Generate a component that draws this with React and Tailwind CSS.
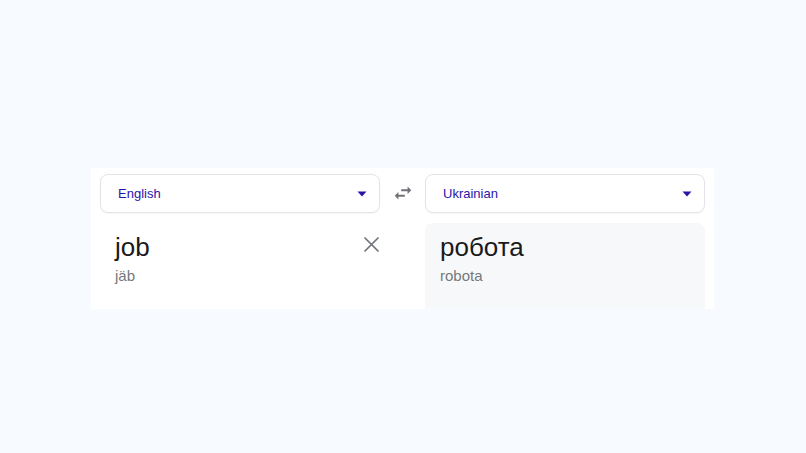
function LangSelect({ label }) {
  return (
    <div className="flex h-[39px] w-[280px] items-center justify-between rounded-lg border border-[#e3e4e8] bg-white pl-[17px] pr-[12px] shadow-[0_1px_2px_rgba(0,0,0,0.04)]">
      <span className="text-[13px] text-[#2a14a8]">{label}</span>
      <svg width="10" height="6" viewBox="0 0 10 6">
        <path d="M0.5 0.5h9L5 5.5z" fill="#2a14a8" />
      </svg>
    </div>
  );
}

function SwapIcon() {
  return (
    <svg width="22" height="22" viewBox="0 0 24 24" fill="#6f7378">
      <path d="M6.99 11L3 15l3.99 4v-3H14v-2H6.99v-3zM21 9l-3.99-4v3H10v2h7.01v3L21 9z" />
    </svg>
  );
}

function ClearIcon() {
  return (
    <svg width="15" height="15" viewBox="0 0 15 15" fill="none" stroke="#6f7378" strokeWidth="1.7" strokeLinecap="round">
      <path d="M1 1l13 13M14 1L1 14" />
    </svg>
  );
}

export default function App() {
  return (
    <div className="flex h-[453px] w-full items-start bg-[#f7fbff] pt-[168px] font-['Liberation_Sans',Arial,sans-serif]">
      <div className="ml-[91px] w-[623px] bg-white px-[9px] pt-[6px]">
        <div className="flex items-center">
          <LangSelect label="English" />
          <div className="flex w-[45px] justify-center pb-[1px]">
            <SwapIcon />
          </div>
          <LangSelect label="Ukrainian" />
        </div>

        <div className="mt-[10px] flex">
          <div className="flex h-[86px] w-[280px] items-start justify-between pl-[15px] pt-[9px]">
            <div>
              <div className="text-[26px] leading-[30px] text-[#1a1a1a]">job</div>
              <div className="mt-[4px] text-[15px] leading-[20px] text-[#75787c]">jäb</div>
            </div>
            <div className="mr-[1px] mt-[5px]">
              <ClearIcon />
            </div>
          </div>
          <div className="w-[45px]" />
          <div className="h-[86px] w-[280px] rounded-t-lg bg-[#f7f8fa] pl-[15px] pt-[9px]">
            <div className="text-[26px] leading-[30px] text-[#1a1a1a]">робота</div>
            <div className="mt-[4px] text-[15px] leading-[20px] text-[#75787c]">robota</div>
          </div>
        </div>
      </div>
    </div>
  );
}
